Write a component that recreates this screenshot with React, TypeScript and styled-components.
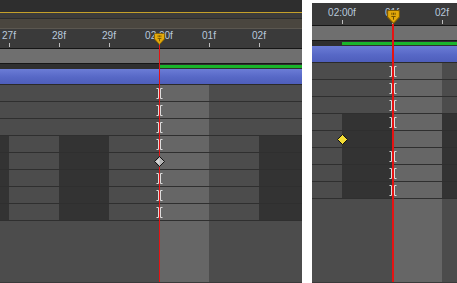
import React from "react";
import styled, { createGlobalStyle } from "styled-components";

type Tone = "dark" | "mid" | "cti";
type Frame = { w: number; tone: Tone };
type Mark = "beam" | "keyGray" | "keyYellow" | null;

const GlobalStyle = createGlobalStyle`
  html, body {
    margin: 0;
    padding: 0;
    background: #ffffff;
  }
  body {
    font-family: "Liberation Sans", Arial, sans-serif;
  }
`;

const Screen = styled.div`
  display: flex;
  align-items: flex-start;
  gap: 10px;
  width: 457px;
  height: 283px;
`;

const Panel = styled.div<{ $w: number; $top: number }>`
  position: relative;
  box-sizing: border-box;
  display: flex;
  flex-direction: column;
  flex: none;
  width: ${(p) => p.$w}px;
  height: ${(p) => 283 - p.$top}px;
  margin-top: ${(p) => p.$top}px;
  background: #4e4e4e;
  border-bottom: 1px solid #3a3a3a;
  overflow: hidden;
`;

const TitleStrip = styled.div`
  height: 12px;
  background: #2e2e2e;
  border-bottom: 1px solid #c4a02a;
`;

const Spacer = styled.div`
  height: 5px;
  background: #3b3b3b;
  border-bottom: 1px solid #2c2c2c;
`;

const WorkBand = styled.div`
  height: 9px;
  background: #4a463f;
  border-bottom: 1px solid #5b5750;
`;

const Ruler = styled.div<{ $h: number; $lead: number }>`
  display: flex;
  align-items: flex-end;
  height: ${(p) => p.$h}px;
  padding-left: ${(p) => Math.max(p.$lead, 0)}px;
  background: #3a3a3a;
  border-bottom: 1px solid #151515;
  overflow: hidden;

  & > div:first-child {
    margin-left: ${(p) => Math.min(p.$lead, 0)}px;
  }
`;

const RulerCell = styled.div`
  display: flex;
  flex-direction: column;
  align-items: center;
  flex: none;
  width: 50px;
  padding-bottom: 1px;
`;

const RulerLabel = styled.span`
  font-size: 10px;
  line-height: 10px;
  color: #b9c9dc;
  white-space: nowrap;
`;

const Tick = styled.i`
  align-self: flex-start;
  width: 1px;
  height: 4px;
  margin: 2px 0 0 25px;
  background: #bdbdbd;
`;

const GrayBar = styled.div`
  height: 14px;
  background: #6f6f6f;
  border-bottom: 1px solid #161616;
`;

const TrackBar = styled.div<{ $start: number }>`
  display: flex;
  height: 5px;
  box-sizing: border-box;
  padding: 1px 0 1px ${(p) => p.$start}px;
  background: #2f2f2f;
`;

const Green = styled.div`
  flex: 1;
  background: #19b52b;
`;

const BlueBar = styled.div<{ $h: number }>`
  height: ${(p) => p.$h}px;
  background: linear-gradient(#6b7cd6, #5768c6 55%, #4e5ebb);
  border-bottom: 1px solid #2a2a2a;
`;

const Row = styled.div`
  display: flex;
  height: 16px;
  border-bottom: 1px solid #2f2f2f;
`;

const Empty = styled.div`
  display: flex;
  flex: 1;
`;

const toneColor = (t: Tone, plain: boolean) =>
  t === "cti" ? "#666666" : t === "dark" && !plain ? "#333333" : "#4c4c4c";

const Cell = styled.div<{ $w: number; $tone: Tone; $plain: boolean }>`
  display: flex;
  align-items: center;
  flex: none;
  width: ${(p) => p.$w}px;
  background: ${(p) => toneColor(p.$tone, p.$plain)};
`;

const Beam = styled.svg`
  flex: none;
  margin-left: -3px;
`;

const Key = styled.svg`
  position: relative;
  z-index: 2;
  flex: none;
  margin-left: -5px;
`;

const Cti = styled.div<{ $x: number; $top: number; $w: number }>`
  position: absolute;
  left: ${(p) => p.$x}px;
  top: ${(p) => p.$top}px;
  bottom: 0;
  z-index: 1;
  display: flex;
  flex-direction: column;
  align-items: center;
  width: ${(p) => p.$w}px;
  pointer-events: none;
`;

const RedLine = styled.div<{ $w: number }>`
  flex: 1;
  width: ${(p) => p.$w}px;
  background: #e51212;
`;

const Head = ({ w, h }: { w: number; h: number }) => (
  <svg width={w} height={h} viewBox="0 0 12 13">
    <path
      d="M1.5 0.5H10.5Q11.5 0.5 11.5 1.5V6.5L6 12.5L0.5 6.5V1.5Q0.5 0.5 1.5 0.5Z"
      fill="#e3a90a"
      stroke="#7d5c05"
    />
    <path d="M4.5 2.5V4.5M6 2.5V4.5M7.5 2.5V4.5M4 6H8M6 6V9" stroke="#6a4c02" strokeWidth="0.9" />
  </svg>
);

// two brackets back to back, the play-head line runs in the gap
const BeamIcon = ({ gap }: { gap: number }) => {
  const w = 6 + gap;
  const r = 2.5 + gap + 1;
  return (
    <Beam width={w} height="11" viewBox={`0 0 ${w} 11`}>
      <path
        d={`M0.5 0.5H2.5V10.5H0.5M${w - 0.5} 0.5H${r}V10.5H${w - 0.5}`}
        fill="none"
        stroke="#dcdcdc"
      />
    </Beam>
  );
};

const KeyIcon = ({ yellow }: { yellow: boolean }) => (
  <Key width="11" height="11" viewBox="0 0 11 11">
    <path
      d="M5.5 0.5L10.5 5.5L5.5 10.5L0.5 5.5Z"
      fill={yellow ? "#f4dd35" : "#b4b4b4"}
      stroke="#111"
    />
    {!yellow && <path d="M5.5 2L2 5.5L5.5 9Z" fill="#d6d6d6" />}
  </Key>
);

type CellsProps = { frames: Frame[]; plain: boolean; mark?: Mark; markAt?: number; gap?: number };

const Cells = ({ frames, plain, mark, markAt, gap = 1 }: CellsProps) => (
  <>
    {frames.map((f, i) => (
      <Cell key={i} $w={f.w} $tone={f.tone} $plain={plain}>
        {i === markAt && mark === "beam" && <BeamIcon gap={gap} />}
        {i === markAt && mark === "keyGray" && <KeyIcon yellow={false} />}
        {i === markAt && mark === "keyYellow" && <KeyIcon yellow />}
      </Cell>
    ))}
  </>
);

type PanelProps = {
  width: number;
  top: number;
  header: boolean;
  rulerH: number;
  rulerLead: number;
  labels: string[];
  frames: Frame[];
  greenStart: number;
  blueH: number;
  keyCell: number;
  keyYellow: boolean;
  cti: { x: number; top: number; w: number; head: [number, number]; line: number };
};

const Timeline = (p: PanelProps) => {
  const ctiCell = p.frames.findIndex((f) => f.tone === "cti");
  return (
    <Panel $w={p.width} $top={p.top}>
      {p.header && (
        <>
          <TitleStrip />
          <Spacer />
          <WorkBand />
        </>
      )}
      <Ruler $h={p.rulerH} $lead={p.rulerLead}>
        {p.labels.map((l) => (
          <RulerCell key={l}>
            <RulerLabel>{l}</RulerLabel>
            <Tick />
          </RulerCell>
        ))}
      </Ruler>
      <GrayBar />
      <TrackBar $start={p.greenStart}>
        <Green />
      </TrackBar>
      <BlueBar $h={p.blueH} />
      {Array.from({ length: 8 }).map((_, i) => (
        <Row key={i}>
          {i === 4 ? (
            <Cells frames={p.frames} plain={false} mark={p.keyYellow ? "keyYellow" : "keyGray"} markAt={p.keyCell} />
          ) : (
            <Cells frames={p.frames} plain={i < 3} mark="beam" markAt={ctiCell} gap={p.cti.line} />
          )}
        </Row>
      ))}
      <Empty>
        <Cells frames={p.frames} plain />
      </Empty>
      <Cti $x={p.cti.x} $top={p.cti.top} $w={p.cti.w}>
        <Head w={p.cti.head[0]} h={p.cti.head[1]} />
        <RedLine $w={p.cti.line} />
      </Cti>
    </Panel>
  );
};

const leftFrames: Frame[] = [
  { w: 9, tone: "dark" },
  { w: 50, tone: "mid" },
  { w: 50, tone: "dark" },
  { w: 50, tone: "mid" },
  { w: 50, tone: "cti" },
  { w: 50, tone: "mid" },
  { w: 43, tone: "dark" },
];

const rightFrames: Frame[] = [
  { w: 30, tone: "mid" },
  { w: 50, tone: "dark" },
  { w: 50, tone: "cti" },
  { w: 15, tone: "dark" },
];

const App = () => (
  <>
    <GlobalStyle />
    <Screen>
      <Timeline
        width={302}
        top={0}
        header
        rulerH={19}
        rulerLead={-16}
        labels={["27f", "28f", "29f", "02:00f", "01f", "02f"]}
        frames={leftFrames}
        greenStart={159}
        blueH={15}
        keyCell={4}
        keyYellow={false}
        cti={{ x: 154, top: 33, w: 11, head: [11, 12], line: 1 }}
      />
      <Timeline
        width={145}
        top={3}
        header={false}
        rulerH={22}
        rulerLead={5}
        labels={["02:00f", "01f", "02f"]}
        frames={rightFrames}
        greenStart={30}
        blueH={16}
        keyCell={1}
        keyYellow
        cti={{ x: 74, top: 7, w: 14, head: [13, 14], line: 2 }}
      />
    </Screen>
  </>
);

export default App;
